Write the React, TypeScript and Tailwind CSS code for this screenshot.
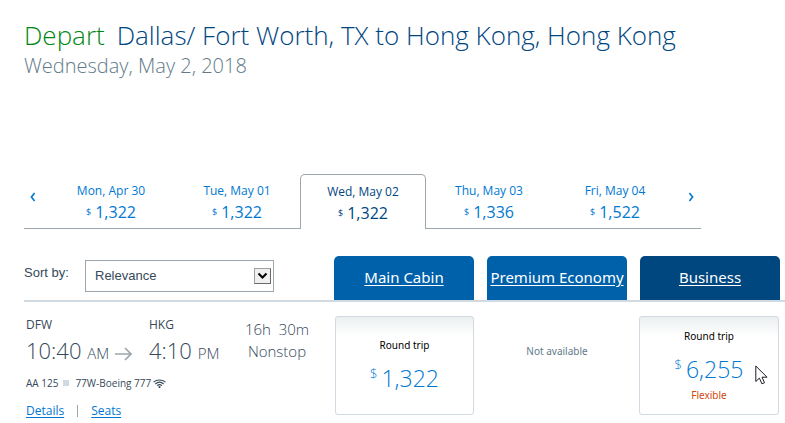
const dates = [
  { day: 'Mon, Apr 30', price: '1,322' },
  { day: 'Tue, May 01', price: '1,322' },
  { day: 'Wed, May 02', price: '1,322', selected: true },
  { day: 'Thu, May 03', price: '1,336' },
  { day: 'Fri, May 04', price: '1,522' },
]

function DateBar() {
  return (
    <nav className="mt-[94px] ml-6 grid w-full max-w-[677px] grid-cols-[24px_repeat(5,1fr)_23px] text-[#0078d2]">
      <button aria-label="Earlier dates" className="flex items-center justify-center border-b border-[#9da6ab] pr-1.5 pb-2">
        <svg width="6" height="10" viewBox="0 0 6 10" fill="none" stroke="currentColor" strokeWidth="1.6">
          <path d="M4.6 1 1.4 5l3.2 4" />
        </svg>
      </button>
      {dates.map((d) => (
        <button
          key={d.day}
          className={
            d.selected
              ? 'flex h-[55px] flex-col items-center rounded-t-[5px] border border-b-0 border-[#9da6ab] pt-2 text-[#00467f]'
              : 'flex h-[55px] flex-col items-center border-b border-[#9da6ab] pt-2'
          }
        >
          <span className="text-[12px] leading-[18px]">{d.day}</span>
          <span className="flex items-center gap-1 text-[16px] leading-6">
            <span className="text-[9px]">$</span>
            {d.price}
          </span>
        </button>
      ))}
      <button aria-label="Later dates" className="flex items-center justify-center border-b border-[#9da6ab] pl-0.5 pb-2">
        <svg width="6" height="10" viewBox="0 0 6 10" fill="none" stroke="currentColor" strokeWidth="1.6">
          <path d="m1.4 1 3.2 4-3.2 4" />
        </svg>
      </button>
    </nav>
  )
}

function SortBy() {
  return (
    <div className="flex items-start pt-1 font-['Liberation_Sans',sans-serif] text-[13px] text-[#36495a]">
      <label htmlFor="sort" className="w-[61px] pt-[5px] leading-4">
        Sort by:
      </label>
      <div className="relative w-[189px]">
        <select id="sort" className="h-8 w-full appearance-none border border-[#9da6ab] bg-white pl-[9px]">
          <option>Relevance</option>
        </select>
        <span className="pointer-events-none absolute top-2 right-[3px] flex h-4 w-[17px] items-center justify-center border border-[#a0a0a0] border-r-[#696969] border-b-[#696969] bg-[#f0f0f0]">
          <svg width="11" height="8" viewBox="0 0 11 8" fill="none" stroke="#000" strokeWidth="2">
            <path d="m1.500 1.500 4 4 4-4" />
          </svg>
        </span>
      </div>
    </div>
  )
}

function CabinTab({ name, active }: { name: string; active?: boolean }) {
  return (
    <a
      href="#"
      className={`flex h-11 items-center justify-center rounded-t-[5px] pb-0.5 font-['Noto_Sans',sans-serif] text-[15px] whitespace-nowrap text-white underline underline-offset-2 ${
        active ? 'bg-[#00467f]' : 'bg-[#0061ab]'
      }`}
    >
      {name}
    </a>
  )
}

function Fare({ price, note }: { price: string; note?: string }) {
  return (
    <button className="flex h-[99px] w-full flex-col items-center justify-center rounded-[3px] border border-[#d0dae0] bg-linear-to-b from-[#ebeff0] to-white to-20% font-['Noto_Sans',sans-serif]">
      <span className="text-[10px] leading-4 text-black">Round trip</span>
      <span className="mt-2 flex items-start gap-1 font-['Open_Sans',sans-serif] text-[23px] leading-[34px] font-light text-[#0078d2]">
        <span className="text-[13px] leading-6">$</span>
        {price}
      </span>
      {note && <span className="text-[10px] leading-[18px] text-[#d1470c]">{note}</span>}
    </button>
  )
}

function Pointer() {
  return (
    <svg className="absolute top-[49px] right-3" width="13" height="20" viewBox="0 0 13 20" fill="#fff" stroke="#1c1c28">
      <path d="M.8 1v15.500l3.600-3.400 2.500 5.700 2.600-1.100-2.500-5.500h5Z" />
    </svg>
  )
}

function FlightDetails() {
  return (
    <div className="pl-0.5 text-[#36495a]">
      <div className="flex">
        <div className="w-[89px] pt-px">
          <div className="text-[12px] leading-4">DFW</div>
          <div className="text-[22px] leading-[34px] font-light whitespace-nowrap">
            10:40 <span className="text-[15px]">AM</span>
          </div>
        </div>
        <svg className="mt-[31px] mr-[17px]" width="17" height="14" viewBox="0 0 17 14" fill="none" stroke="#9da6ab" strokeWidth="1.7">
          <path d="M0 7h16M10 1l6 6-6 6" />
        </svg>
        <div className="w-[88px] pt-px">
          <div className="text-[12px] leading-4">HKG</div>
          <div className="text-[22px] leading-[34px] font-light whitespace-nowrap">
            4:10 <span className="text-[15px]">PM</span>
          </div>
        </div>
        <div className="w-[80px] pt-0.5 text-center text-[15px] leading-[22px] font-light whitespace-nowrap">
          16h&nbsp; 30m
          <br />
          Nonstop
        </div>
      </div>
      <div className="mt-[5px] flex items-center text-[10px] leading-4">
        AA 125
        <span className="mr-1.5 ml-[5px] size-1.5 bg-[#d0dae0]" />
        77W-Boeing 777
        <svg className="ml-0.5" width="13" height="9" viewBox="0 0 13 9" fill="none" stroke="#36495a" strokeWidth="1.1">
          <path d="M.5 3.200c3.400-3 8.600-3 12 0M2.300 5c2.500-2.200 5.900-2.200 8.400 0M4.100 6.700c1.500-1.300 3.300-1.300 4.800 0" />
          <circle cx="6.500" cy="8" r=".5" />
        </svg>
      </div>
      <div className="mt-3 flex items-center text-[12px] leading-4 text-[#0078d2]">
        <a href="#" className="underline underline-offset-2">
          Details
        </a>
        <span className="mx-[13px] h-3 w-px bg-[#9da6ab]" />
        <a href="#" className="underline underline-offset-2">
          Seats
        </a>
      </div>
    </div>
  )
}

export default function App() {
  return (
    <main className="bg-white pt-[19px] pb-1 font-['Open_Sans',sans-serif]">
      <header className="pl-6">
        <h1 className="text-[26px] leading-8 font-light text-[#00467f]">
          <span className="mr-3 text-[#008712]">Depart</span>
          Dallas/ Fort Worth, TX to Hong Kong, Hong Kong
        </h1>
        <p className="pt-px text-[20px] leading-7 font-light text-[#627a88]">Wednesday, May 2, 2018</p>
      </header>
      <DateBar />
      <div className="mt-[27px] ml-6 grid grid-cols-[1fr_140px_140px_140px] gap-x-[13px] border-b-2 border-[#d0dae0] pr-[5px]">
        <SortBy />
        <CabinTab name="Main Cabin" />
        <CabinTab name="Premium Economy" />
        <CabinTab name="Business" active />
      </div>
      <section className="mt-3.5 ml-6 grid grid-cols-[1fr_140px_140px_140px] gap-x-[13px] pr-[5px]">
        <FlightDetails />
        <div className="pl-px">
          <Fare price="1,322" />
        </div>
        <div className="pt-[27px] text-center font-['Noto_Sans',sans-serif] text-[10px] leading-4 text-[#627a88]">Not available</div>
        <div className="relative -ml-px pr-px">
          <Fare price="6,255" note="Flexible" />
          <Pointer />
        </div>
      </section>
    </main>
  )
}
